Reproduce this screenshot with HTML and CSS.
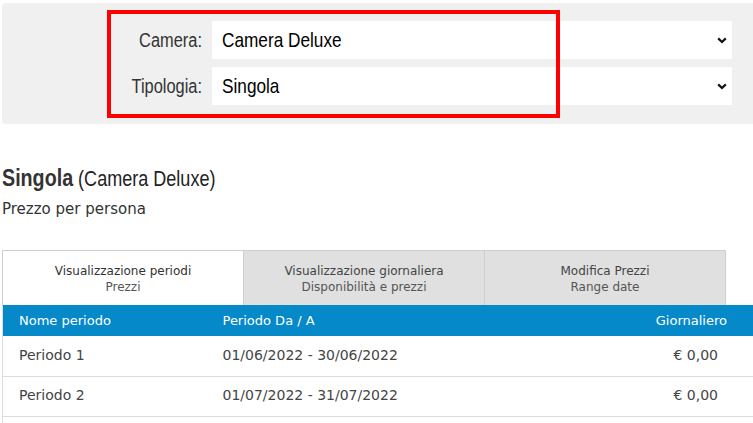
FILE: index.html
```html
<!DOCTYPE html>
<html lang="it">
  <head>
    <meta charset="UTF-8" />
    <meta name="viewport" content="width=device-width, initial-scale=1.0" />
    <title>Prezzi camera</title>
    <link rel="stylesheet" href="styles.css">
  </head>
  <body>
    <div class="page">
      <div class="filters">
        <label class="field-label">Camera:</label>
        <div class="select-box">
          <span class="select-value">Camera Deluxe</span>
          <svg class="chevron" width="10" height="7" viewBox="0 0 10 7"><path d="M1.2 1.4 L5 5 L8.8 1.4" fill="none" stroke="#111" stroke-width="2.2"/></svg>
        </div>
        <label class="field-label">Tipologia:</label>
        <div class="select-box">
          <span class="select-value">Singola</span>
          <svg class="chevron" width="10" height="7" viewBox="0 0 10 7"><path d="M1.2 1.4 L5 5 L8.8 1.4" fill="none" stroke="#111" stroke-width="2.2"/></svg>
        </div>
        <div class="highlight"></div>
      </div>

      <h2 class="room-title"><strong>Singola</strong> <span>(Camera Deluxe)</span></h2>
      <p class="subtitle">Prezzo per persona</p>

      <div class="tabs">
        <div class="tab active">Visualizzazione periodi<small>Prezzi</small></div>
        <div class="tab">Visualizzazione giornaliera<small>Disponibilità e prezzi</small></div>
        <div class="tab">Modifica Prezzi<small>Range date</small></div>
      </div>

      <table class="periods">
        <thead>
          <tr>
            <th class="col-name">Nome periodo</th>
            <th class="col-dates">Periodo Da / A</th>
            <th class="col-price">Giornaliero</th>
          </tr>
        </thead>
        <tbody>
          <tr>
            <td class="col-name">Periodo 1</td>
            <td class="col-dates">01/06/2022 - 30/06/2022</td>
            <td class="col-price">€ 0,00</td>
          </tr>
          <tr>
            <td class="col-name">Periodo 2</td>
            <td class="col-dates">01/07/2022 - 31/07/2022</td>
            <td class="col-price">€ 0,00</td>
          </tr>
          <tr>
            <td class="col-name"></td>
            <td class="col-dates"></td>
            <td class="col-price"></td>
          </tr>
        </tbody>
      </table>
    </div>
  </body>
</html>
```

FILE: styles.css
```css
* {
  box-sizing: border-box;
  margin: 0;
  padding: 0;
}
body {
  width: 753px;
  height: 423px;
  overflow: hidden;
  background: #ffffff;
  font-family: "DejaVu Sans", sans-serif;
  color: #444;
}

.page {
  padding: 3px 0 0 2px;
}

/* filter panel - the narrow face is faked by squeezing Liberation Sans */
.filters {
  position: relative;
  width: 760px;
  display: grid;
  grid-template-columns: 200px 1fr;
  column-gap: 10px;
  row-gap: 8px;
  align-items: center;
  padding: 18px 30px 19px 0;
  background: #f0f0f0;
  border-radius: 4px;
}
.field-label {
  text-align: right;
  font-family: "Liberation Sans", Arial, sans-serif;
  font-size: 20px;
  color: #333;
  white-space: nowrap;
  transform: scaleX(0.82);
  transform-origin: right center;
}
.select-box {
  position: relative;
  display: flex;
  align-items: center;
  height: 38px;
  padding-left: 10px;
  background: #ffffff;
}
.select-value {
  display: inline-block;
  font-family: "Liberation Sans", Arial, sans-serif;
  font-size: 21px;
  line-height: 24px;
  color: #000;
  white-space: nowrap;
  transform: scaleX(0.82);
  transform-origin: left center;
}
.chevron {
  position: absolute;
  right: 5px;
  top: 16px;
}
.highlight {
  position: absolute;
  left: 105px;
  top: 7px;
  width: 453px;
  height: 108px;
  border: 4px solid #ff0000;
  pointer-events: none;
}

/* heading */
.room-title {
  margin-top: 40px;
  width: 300px;
  line-height: 28px;
  font-family: "Liberation Sans", Arial, sans-serif;
  font-weight: normal;
  font-size: 22px;
  color: #222;
  transform: scaleX(0.82);
  transform-origin: left center;
  white-space: nowrap;
}
.room-title strong {
  font-size: 24px;
  font-weight: bold;
  color: #333;
}
.subtitle {
  margin-top: 7px;
  font-size: 15px;
  line-height: 18px;
  color: #333;
}

/* tabs */
.tabs {
  display: flex;
  width: 724px;
  margin-top: 32px;
}
.tab {
  flex: 1;
  padding: 12px 0 10px;
  border-top: 1px solid #cfcfcf;
  border-left: 1px solid #cfcfcf;
  background: #e0e0e0;
  text-align: center;
  font-size: 12px;
  line-height: 16px;
  color: #444;
}
.tab:last-child {
  border-right: 1px solid #cfcfcf;
}
.tab.active {
  background: #ffffff;
  color: #333;
}
.tab small {
  display: block;
  font-size: 12px;
  color: #555;
}

/* table */
.periods {
  width: 751px;
  border-collapse: collapse;
  border-left: 1px solid #dddddd;
}
.periods th {
  height: 31px;
  padding: 0 16px;
  background: #0689c9;
  color: #ffffff;
  font-weight: normal;
  font-size: 13px;
  text-align: left;
}
.periods td {
  height: 40px;
  padding: 0 16px 2px;
  border-bottom: 1px solid #dddddd;
  font-size: 14px;
  color: #444;
}
.periods .col-name {
  width: 204px;
}
.periods th.col-price {
  text-align: right;
  padding-right: 26px;
}
.periods td.col-price {
  text-align: right;
  padding-right: 35px;
}
```
